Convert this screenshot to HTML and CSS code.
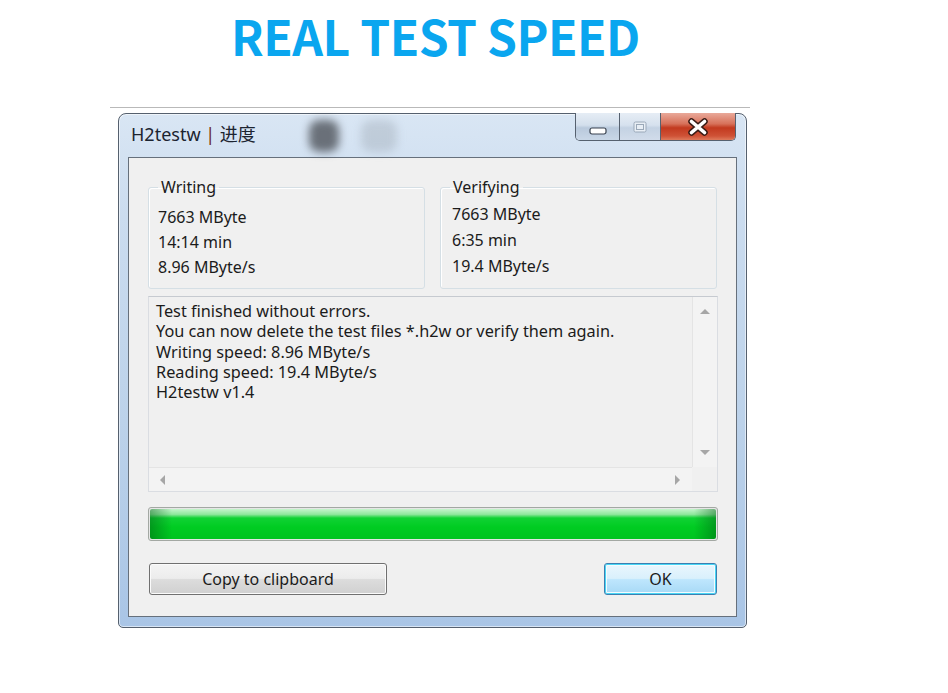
FILE: index.html
```html
<!DOCTYPE html>
<html lang="en">
<head>
<meta charset="utf-8">
<title>REAL TEST SPEED</title>
<link rel="stylesheet" href="styles.css">
</head>
<body>
<h1 class="headline">REAL TEST SPEED</h1>
<div class="desk">
  <div class="window">
    <div class="titlebar">
      <span class="title">H2testw <span class="sep">|</span> 进度</span>
      <span class="glass glass-dark"></span>
      <span class="glass glass-light"></span>
      <div class="caption">
        <span class="cap cap-min">
          <svg width="18" height="8" viewBox="0 0 18 8"><rect x="1" y="1" width="16" height="6" rx="2" fill="#fff" stroke="#3a4350" stroke-width="1.2"/></svg>
        </span>
        <span class="cap cap-max">
          <svg width="14" height="12" viewBox="0 0 14 12"><rect x="1" y="1" width="12" height="10" rx="1.5" fill="#e8eef5" stroke="#9aa8b8" stroke-width="1"/><rect x="3.5" y="3.5" width="7" height="5" fill="none" stroke="#9aa8b8" stroke-width="1"/></svg>
        </span>
        <span class="cap cap-close">
          <svg width="24" height="18" viewBox="0 0 24 18"><path d="M5.5 3.5 L18.5 14.5 M18.5 3.5 L5.5 14.5" stroke="#3a1c16" stroke-width="6.5" stroke-linecap="round"/><path d="M5.5 3.5 L18.5 14.5 M18.5 3.5 L5.5 14.5" stroke="#ffffff" stroke-width="3.6" stroke-linecap="round"/></svg>
        </span>
      </div>
    </div>
    <div class="client">
      <div class="groups">
        <fieldset class="group">
          <legend>Writing</legend>
          <div class="line">7663 MByte</div>
          <div class="line">14:14 min</div>
          <div class="line">8.96 MByte/s</div>
        </fieldset>
        <fieldset class="group group-verify">
          <legend>Verifying</legend>
          <div class="line">7663 MByte</div>
          <div class="line">6:35 min</div>
          <div class="line">19.4 MByte/s</div>
        </fieldset>
      </div>
      <div class="log">
        <div class="log-text">
          <div>Test finished without errors.</div>
          <div>You can now delete the test files *.h2w or verify them again.</div>
          <div>Writing speed: 8.96 MByte/s</div>
          <div>Reading speed: 19.4 MByte/s</div>
          <div>H2testw v1.4</div>
        </div>
        <div class="vscroll">
          <span class="arrow arrow-up"></span>
          <span class="arrow arrow-down"></span>
        </div>
        <div class="hscroll">
          <span class="arrow arrow-left"></span>
          <span class="arrow arrow-right"></span>
        </div>
        <div class="corner"></div>
      </div>
      <div class="progress"><div class="fill"></div></div>
      <div class="buttons">
        <button class="btn btn-copy" type="button">Copy to clipboard</button>
        <button class="btn btn-ok" type="button">OK</button>
      </div>
    </div>
  </div>
</div>
</body>
</html>
```

FILE: styles.css
```css
html, body {
  margin: 0;
  padding: 0;
  background: #ffffff;
}

body {
  width: 948px;
  min-height: 693px;
  font-family: "Noto Sans", "Noto Sans CJK SC", sans-serif;
  color: #1b1b1b;
}

.headline {
  margin: 0;
  padding: 0 0 0 231px;
  height: 70px;
  font-family: "Noto Sans CJK SC", "Noto Sans", sans-serif;
  font-weight: 700;
  font-size: 48px;
  line-height: 70px;
  color: #0aa6ef;
  letter-spacing: -0.5px;
  white-space: nowrap;
}

.desk {
  margin: 37px 0 0 110px;
  width: 640px;
  padding: 5px 0 0 8px;
  border-top: 1px solid #b9b9b9;
  box-sizing: border-box;
}

.window {
  width: 629px;
  height: 515px;
  box-sizing: border-box;
  border: 1px solid #55606e;
  border-radius: 8px 8px 5px 5px;
  background: linear-gradient(to bottom, #d9e6f4 0%, #cbdcef 20%, #bcd2ea 60%, #a9c5e6 100%);
  box-shadow: inset 0 0 0 1px rgba(255, 255, 255, 0.55);
  display: flex;
  flex-direction: column;
}

.titlebar {
  position: relative;
  height: 43px;
  display: flex;
  align-items: flex-start;
  padding-left: 12px;
  flex: none;
}

.title {
  margin-top: 8px;
  font-size: 18px;
  line-height: 24px;
  color: #1c2430;
  white-space: nowrap;
}

.sep {
  color: #6b2a22;
}

.glass {
  position: absolute;
  top: 6px;
  height: 32px;
  border-radius: 10px;
  filter: blur(4px);
}

.glass-dark {
  left: 190px;
  width: 30px;
  background: rgba(70, 74, 80, 0.75);
}

.glass-light {
  left: 242px;
  width: 36px;
  background: rgba(140, 150, 160, 0.3);
}

.caption {
  margin-left: auto;
  margin-right: 10px;
  margin-top: -1px;
  height: 28px;
  display: flex;
  border: 1px solid #56616f;
  border-top: none;
  border-radius: 0 0 5px 5px;
  overflow: hidden;
  box-sizing: border-box;
}

.cap {
  display: flex;
  align-items: center;
  justify-content: center;
  height: 100%;
}

.cap-min {
  width: 44px;
  background: linear-gradient(to bottom, #e6edf5 0%, #d3dfec 45%, #b9c9dc 55%, #c9d7e7 100%);
  border-right: 1px solid #56616f;
  align-items: flex-end;
  padding-bottom: 5px;
  box-sizing: border-box;
}

.cap-max {
  width: 40px;
  background: linear-gradient(to bottom, #e6edf5 0%, #d6e1ee 45%, #c4d2e3 55%, #d1dcea 100%);
  border-right: 1px solid #56616f;
}

.cap-close {
  width: 74px;
  background: linear-gradient(to bottom, #e9a99a 0%, #d7715a 40%, #c2391f 55%, #cf5236 85%, #de7a5c 100%);
}

.client {
  flex: 1;
  margin: 0 9px 10px 9px;
  border: 1px solid #66707c;
  background: #f0f0f0;
  padding: 19px 18px 21px 19px;
  display: flex;
  flex-direction: column;
}

.groups {
  display: grid;
  grid-template-columns: 277px 277px;
  column-gap: 15px;
}

.group {
  margin: 0;
  height: 112px;
  box-sizing: border-box;
  border: 1px solid #d5dfe5;
  border-radius: 3px;
  padding: 8px 9px 8px 9px;
  min-inline-size: 0;
  box-shadow: inset 1px 1px 0 #ffffff;
}

.group legend {
  padding: 0 3px;
  font-size: 16px;
  line-height: 20px;
  color: #1b1b1b;
}

.line {
  font-size: 16px;
  line-height: 25px;
  white-space: nowrap;
}

.group-verify {
  padding: 4px 9px 8px 11px;
}

.group-verify legend {
  margin-left: -2px;
}

.group-verify .line {
  line-height: 26px;
}

.log {
  margin-top: 7px;
  height: 196px;
  box-sizing: border-box;
  border: 1px solid #dadde2;
  border-top-color: #c6cad0;
  display: grid;
  grid-template-columns: 1fr 25px;
  grid-template-rows: 1fr 24px;
  background: #f0f0f0;
}

.log-text {
  padding: 4px 0 0 7px;
  font-size: 16.3px;
  line-height: 20.25px;
  white-space: nowrap;
  overflow: hidden;
}

.vscroll {
  display: flex;
  flex-direction: column;
  justify-content: space-between;
  align-items: center;
  padding: 12px 0 12px 0;
  background: #f3f3f3;
  border-left: 1px solid #e4e4e4;
}

.hscroll {
  display: flex;
  justify-content: space-between;
  align-items: center;
  padding: 0 12px 0 11px;
  background: #f3f3f3;
  border-top: 1px solid #e4e4e4;
}

.corner {
  background: #f0f0f0;
}

.arrow {
  width: 0;
  height: 0;
  display: block;
}

.arrow-up {
  border-left: 5px solid transparent;
  border-right: 5px solid transparent;
  border-bottom: 5px solid #a6a6a6;
}

.arrow-down {
  border-left: 5px solid transparent;
  border-right: 5px solid transparent;
  border-top: 5px solid #a6a6a6;
}

.arrow-left {
  border-top: 5px solid transparent;
  border-bottom: 5px solid transparent;
  border-right: 5px solid #a6a6a6;
}

.arrow-right {
  border-top: 5px solid transparent;
  border-bottom: 5px solid transparent;
  border-left: 5px solid #a6a6a6;
}

.progress {
  margin-top: 15px;
  height: 34px;
  box-sizing: border-box;
  border: 1px solid #a3a8a3;
  border-radius: 3px;
  background: #e6e6e6;
  padding: 1px;
}

.fill {
  height: 100%;
  border-radius: 2px;
  background:
    linear-gradient(to right, rgba(0, 90, 20, 0.45) 0, rgba(0, 90, 20, 0) 22px, rgba(0, 90, 20, 0) calc(100% - 22px), rgba(0, 90, 20, 0.45) 100%),
    linear-gradient(to bottom, #c5f5cc 0%, #8fe79d 18%, #10d234 30%, #00cc22 60%, #00c41f 100%);
}

.buttons {
  margin-top: 22px;
  display: flex;
  justify-content: space-between;
  padding: 0 1px;
}

.btn {
  height: 32px;
  box-sizing: border-box;
  border-radius: 3px;
  font-family: "Noto Sans", sans-serif;
  font-size: 16px;
  color: #1b1b1b;
  padding: 0;
  cursor: default;
}

.btn-copy {
  width: 238px;
  border: 1px solid #707070;
  background: linear-gradient(to bottom, #f4f4f4 0%, #ececec 48%, #dcdcdc 52%, #d0d0d0 100%);
  box-shadow: inset 0 0 0 1px #fbfbfb;
}

.btn-ok {
  width: 113px;
  border: 1px solid #3c7fb1;
  background: linear-gradient(to bottom, #eaf6fd 0%, #d9f0fc 48%, #bee6fd 52%, #a7d9f5 100%);
  box-shadow: inset 0 0 0 1px #48d6f5, inset 0 0 0 2px #f4fbfe;
}
```
